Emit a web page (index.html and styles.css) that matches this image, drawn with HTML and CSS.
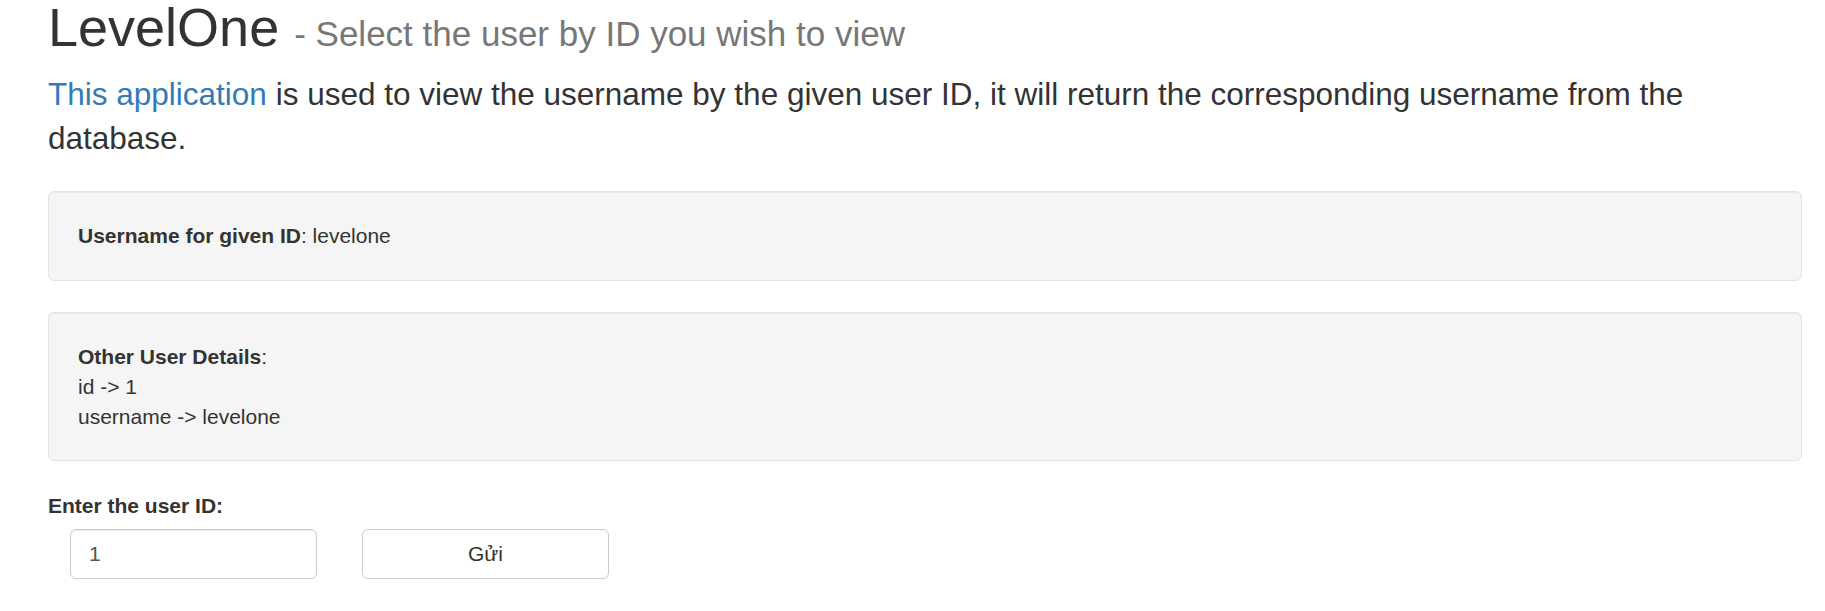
FILE: index.html
```html
<!DOCTYPE html>
<html lang="en">
<head>
<meta charset="utf-8">
<title>LevelOne</title>
<link rel="stylesheet" href="styles.css">
</head>
<body>
<div class="page">
  <h1 class="title">LevelOne <small class="subtitle">- Select the user by ID you wish to view</small></h1>
  <p class="lead"><a class="link" href="#">This application</a> is used to view the username by the given user ID, it will return the corresponding username from the database.</p>
  <div class="well">
    <div class="line"><b>Username for given ID</b>: levelone</div>
  </div>
  <div class="well well-tall">
    <div class="line"><b>Other User Details</b>:</div>
    <div class="line">id -&gt; 1</div>
    <div class="line">username -&gt; levelone</div>
  </div>
  <form class="form">
    <label class="label" for="uid">Enter the user ID:</label>
    <div class="controls">
      <input class="input" id="uid" type="text" value="1">
      <button class="button" type="button">Gửi</button>
    </div>
  </form>
</div>
</body>
</html>
```

FILE: styles.css
```css
html, body {
  margin: 0;
  padding: 0;
  background: #fff;
}
body {
  font-family: "Liberation Sans", Arial, sans-serif;
  font-size: 21px;
  line-height: 30px;
  color: #333;
}
.page {
  padding: 0 23px 0 48px;
}
.title {
  margin: 0 0 11px;
  font-size: 54px;
  line-height: 55px;
  font-weight: 400;
  color: #333;
}
.subtitle {
  font-size: 35px;
  color: #777;
}
.lead {
  margin: 0 0 31px;
  font-size: 31.5px;
  line-height: 44px;
  font-weight: 400;
}
.link {
  color: #337ab7;
  text-decoration: none;
}
.well {
  background: #f5f5f5;
  border: 1px solid #e3e3e3;
  border-radius: 6px;
  box-shadow: inset 0 1px 1px rgba(0,0,0,0.05);
  padding: 29px;
  margin-bottom: 31px;
}
.well-tall {
  padding-bottom: 28px;
  margin-bottom: 30px;
}
.line b {
  font-weight: 700;
}
.form {
  margin: 0;
}
.label {
  display: inline-block;
  font-weight: 700;
  margin-bottom: 8px;
}
.controls {
  display: flex;
  gap: 45px;
  padding-left: 22px;
}
.input, .button {
  box-sizing: border-box;
  width: 247px;
  height: 50px;
  border: 1px solid #ccc;
  border-radius: 6px;
  background: #fff;
  font-family: "Liberation Sans", Arial, sans-serif;
  font-size: 21px;
  color: #555;
  margin: 0;
}
.input {
  padding: 0 18px;
  box-shadow: inset 0 1px 1px rgba(0,0,0,0.075);
}
.button {
  color: #333;
  text-align: center;
  padding: 0;
}
```
